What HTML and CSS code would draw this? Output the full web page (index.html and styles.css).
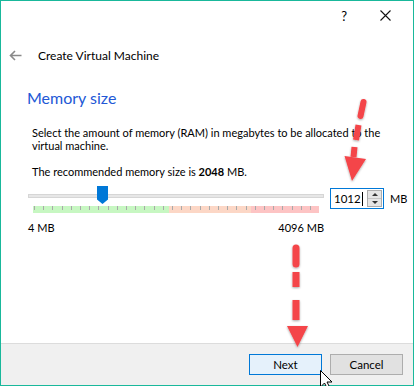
FILE: index.html
```html
<!DOCTYPE html>
<html lang="en">
<head>
  <meta charset="UTF-8" />
  <title>Create Virtual Machine</title>
  <link rel="stylesheet" href="styles.css">
</head>
<body>

  <div class="window">
    <!-- title bar -->
    <div class="titlebar">
      <span class="help">?</span>
      <svg class="close" width="11" height="11" viewBox="0 0 11 11">
        <path d="M0.5 0.5 L10.5 10.5 M10.5 0.5 L0.5 10.5" stroke="#111" stroke-width="1.1" fill="none"/>
      </svg>
    </div>

    <!-- wizard header -->
    <div class="header">
      <svg class="back" width="13" height="11" viewBox="0 0 13 11">
        <path d="M12.5 5.5 H1.5 M6 1 L1.5 5.5 L6 10" stroke="#8a8a8a" stroke-width="1.6" fill="none"/>
      </svg>
      <span>Create Virtual Machine</span>
    </div>

    <!-- page body -->
    <div class="page">
      <h1>Memory size</h1>
      <p class="desc">Select the amount of memory (RAM) in megabytes to be allocated to the<br>virtual machine.</p>
      <p class="rec">The recommended memory size is <b>2048</b> MB.</p>

      <div class="slider-row">
        <div class="slider">
          <div class="track">
            <div class="thumb"></div>
          </div>
          <div class="scale"></div>
          <div class="limits">
            <span>4 MB</span>
            <span>4096 MB</span>
          </div>
        </div>

        <div class="spin">
          <span class="value">1012</span>
          <span class="caret"></span>
          <div class="arrows">
            <div class="up"></div>
            <div class="down"></div>
          </div>
        </div>
        <span class="unit">MB</span>
      </div>
    </div>

    <!-- buttons -->
    <div class="footer">
      <button class="btn next">Next</button>
      <button class="btn">Cancel</button>
    </div>

    <!-- red annotation arrows + mouse pointer drawn over the dialog -->
    <svg class="marks" width="414" height="386" viewBox="0 0 414 386">
      <defs>
        <filter id="shadow" x="-50%" y="-50%" width="200%" height="200%">
          <feDropShadow dx="0" dy="1" stdDeviation="1.2" flood-color="#000" flood-opacity="0.35"/>
        </filter>
      </defs>
      <g filter="url(#shadow)" stroke="#f44448" stroke-width="6" stroke-linecap="round" fill="#f44448">
        <path d="M363.5 102 L360.5 116" />
        <path d="M358.5 125 L356 140" stroke-linecap="butt"/>
        <path d="M354.5 147 L353.5 157" stroke-linecap="butt"/>
        <path d="M344.5 156 L366 159 L352 181 Z" stroke="none"/>

        <path d="M296 248 L296 264" stroke-width="7"/>
        <path d="M296 272 L296 287" stroke-width="7" stroke-linecap="butt"/>
        <path d="M296 300 L296 320" stroke-width="7" stroke-linecap="butt"/>
        <path d="M287 326 L308 326 L297.5 347 Z" stroke="none"/>
      </g>
      <path d="M320.5 370.5 L320.5 387 L324.5 383 L327.5 389 L330 388 L327 382 L332 382 Z" fill="#fff" stroke="#000" stroke-width="1"/>
    </svg>
  </div>

</body>
</html>
```

FILE: styles.css
```css
/* ----- base ----- */
* {
  margin: 0;
  padding: 0;
  box-sizing: border-box;
}

html, body {
  width: 100%;
  height: 100%;
  overflow: hidden;
  background: #fff;
}

body {
  font-family: Lato, "Noto Sans", sans-serif;
  font-size: 11px;
  color: #000;
}

/* ----- dialog frame ----- */
.window {
  position: relative;
  width: 414px;
  height: 386px;
  border: 1px solid #19b89b;
  display: flex;
  flex-direction: column;
  background: #fff;
}

.titlebar {
  height: 29px;
  display: flex;
  align-items: center;
  justify-content: flex-end;
  padding-right: 22px;
  gap: 33px;
}
.titlebar .help {
  font-size: 13px;
  line-height: 1;
  margin-top: 1px;
}

.header {
  height: 50px;
  display: flex;
  align-items: center;
  padding-left: 8px;
  font-size: 12px;
}
.header .back {
  margin-right: 16px;
}

/* ----- page ----- */
.page {
  padding-left: 26px;
}

.page h1 {
  font-weight: normal;
  font-size: 16px;
  color: #2258d6;
  line-height: 20px;
  margin-top: 8px;
}

.desc {
  margin-top: 18px;
  padding-left: 5px;
  line-height: 13px;
  white-space: nowrap;
}

.rec {
  margin-top: 13px;
  padding-left: 5px;
  line-height: 14px;
}

/* slider + spin box */
.slider-row {
  display: flex;
  align-items: flex-start;
  margin-top: 1px;
  padding-left: 1px;
}

.slider {
  width: 296px;
}

.track {
  position: relative;
  height: 4px;
  margin-top: 14px;
  background: #e7e7e7;
  border: 1px solid #d6d6d6;
}
.thumb {
  position: absolute;
  left: 68px;
  top: -9px;
  width: 11px;
  height: 18px;
  background: #0078d7;
  clip-path: polygon(0 0, 100% 0, 100% 75%, 50% 100%, 0 75%);
}

.scale {
  height: 7px;
  margin: 8px 0 0 5px;
  width: 286px;
  background:
    repeating-linear-gradient(to right, #a9a9a9 0 1px, transparent 1px 9.2px) 1px 0 / 100% 4px no-repeat,
    linear-gradient(to right, #c7f7c2 0 136px, #fcd7c6 136px 218px, #fdc4c4 218px);
}

.limits {
  display: flex;
  justify-content: space-between;
  margin-top: 8px;
  line-height: 14px;
}

.spin {
  position: relative;
  width: 54px;
  height: 21px;
  margin: 8px 0 0 6px;
  border: 1px solid #0078d7;
  display: flex;
  align-items: center;
  padding-left: 3px;
}
.spin .value {
  line-height: 1;
  font-size: 11.5px;
}
.spin .caret {
  width: 1px;
  height: 14px;
  background: #000;
  margin-left: 1px;
}
.spin .arrows {
  margin-left: auto;
  margin-right: 1px;
  width: 15px;
  height: 17px;
  border: 1px solid #adadad;
  background: #e5e5e5;
  display: flex;
  flex-direction: column;
}
.arrows .up,
.arrows .down {
  flex: 1;
  display: flex;
  align-items: center;
  justify-content: center;
}
.arrows .up::before {
  content: "";
  border-left: 3px solid transparent;
  border-right: 3px solid transparent;
  border-bottom: 3px solid #333;
}
.arrows .down::before {
  content: "";
  border-left: 3px solid transparent;
  border-right: 3px solid transparent;
  border-top: 3px solid #333;
}
.arrows .up {
  border-bottom: 1px solid #c4c4c4;
}

.unit {
  margin: 12px 0 0 6px;
  line-height: 14px;
}

/* ----- footer ----- */
.footer {
  margin-top: auto;
  height: 42px;
  border-top: 1px solid #dcdcdc;
  background: #f0f0f0;
  display: flex;
  justify-content: flex-end;
  align-items: flex-start;
  gap: 8px;
  padding: 10px 10px 0 0;
}

.btn {
  width: 73px;
  height: 21px;
  font-family: inherit;
  font-size: 11.5px;
  color: #000;
  background: #e1e1e1;
  border: 1px solid #adadad;
}
.btn.next {
  background: #e5f1fb;
  border-color: #0078d7;
}

/* annotation overlay */
.marks {
  position: absolute;
  left: -1px;
  top: -1px;
  pointer-events: none;
}
```
